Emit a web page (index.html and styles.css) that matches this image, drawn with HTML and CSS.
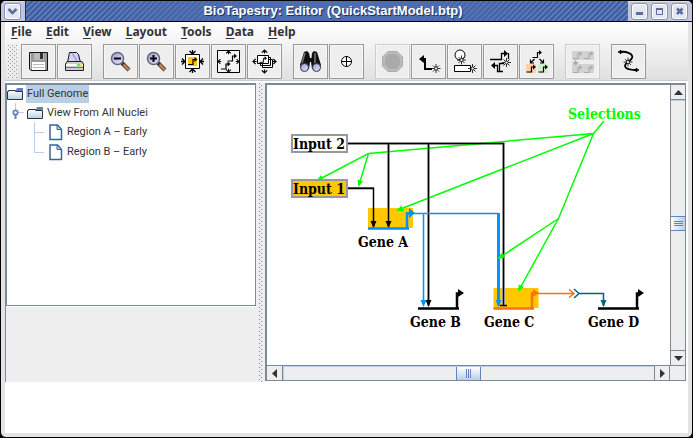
FILE: index.html
```html
<!DOCTYPE html>
<html lang="en">
<head>
<meta charset="utf-8">
<title>BioTapestry: Editor (QuickStartModel.btp)</title>
<link rel="stylesheet" href="styles.css">
</head>
<body>
<svg class="defs" aria-hidden="true">
  <defs>
    <g id="star" fill="none" stroke="#000"><path d="M0-4.500V4.500M-4.500 0H4.500M-3-3L3 3M-3 3L3-3" stroke-width=".8"/><circle r="1.600" fill="#eee" stroke-width=".7"/></g>
    <g id="gene"><path d="M-4.500 3.500H.5V-1.500H3" fill="none" stroke="currentColor" stroke-width="1.200"/><path d="M2-4L5-1.500L2 1Z" fill="currentColor"/></g>
    <g id="tip"><path d="M-3-3L0 0L3-3M0-4V0" fill="none" stroke="#000" stroke-width="1.300"/></g>
    <linearGradient id="lens" x1="0" y1="0" x2="1" y2="1"><stop offset="0" stop-color="#9c9cd8"/><stop offset="1" stop-color="#e8e8ff"/></linearGradient>
    <linearGradient id="folder-fill" x1="0" y1="0" x2="0" y2="1"><stop offset="0" stop-color="#fff"/><stop offset="1" stop-color="#b8cfe5"/></linearGradient>
    <g id="folder"><path d="M9 3L10 1H16V4H9Z" fill="#6382bf"/><path d="M.5 12.500V4.500H1.500V3.500H8.500V4.500H15.500V12.500Z" fill="url(#folder-fill)" stroke="#333"/></g>
    <g id="doc"><path d="M1 1H8.500L12.500 5.500V15.500H1Z" fill="#fff" stroke="#336699" stroke-width="1.500"/><path d="M8 1V5.500H12.500Z" fill="#b8cfe5" stroke="#336699"/></g>
    <marker id="m-black" viewBox="0 0 7 7" refX="6" refY="3.500" markerWidth="7" markerHeight="7" markerUnits="userSpaceOnUse" orient="auto"><path d="M0 .5L7 3.500L0 6.500Z"/></marker>
    <marker id="m-green" viewBox="0 0 7 7" refX="5" refY="3.500" markerWidth="7" markerHeight="7" markerUnits="userSpaceOnUse" orient="auto"><path d="M0 .5L7 3.500L0 6.500Z" fill="#0f0"/></marker>
    <marker id="m-blue" viewBox="0 0 7 7" refX="6" refY="3.500" markerWidth="7" markerHeight="7" markerUnits="userSpaceOnUse" orient="auto"><path d="M0 .5L7 3.500L0 6.500Z" fill="#0090ff"/></marker>
    <marker id="m-teal" viewBox="0 0 7 7" refX="6" refY="3.500" markerWidth="7" markerHeight="7" markerUnits="userSpaceOnUse" orient="auto"><path d="M0 .5L7 3.500L0 6.500Z" fill="#006478"/></marker>
  </defs>
</svg>
<div class="window">
  <header class="titlebar">
    <div class="title-side">
      <button class="win-btn" aria-label="Window menu"><svg viewBox="0 0 15 15"><path d="M3.500 5L7.500 9L11.500 5" fill="none" stroke="#5c6a9c" stroke-width="2.500"/></svg></button>
    </div>
    <div class="title-strip"><h1 class="title-text">BioTapestry: Editor (QuickStartModel.btp)</h1></div>
    <div class="title-side">
      <button class="win-btn" aria-label="Minimize"><svg viewBox="0 0 15 15"><path d="M4 8H11V11H4Z" fill="#5c6a9c"/></svg></button>
      <button class="win-btn" aria-label="Maximize"><svg viewBox="0 0 15 15"><path d="M4.500 4.500H10.500V10.500H4.500Z" fill="none" stroke="#5c6a9c"/><path d="M4 5H11" stroke="#5c6a9c" stroke-width="2"/></svg></button>
      <button class="win-btn" aria-label="Close"><svg viewBox="0 0 15 15"><path d="M5 4.500L10.500 10M10.500 4.500L5 10" stroke="#5c6a9c" stroke-width="2.500"/></svg></button>
    </div>
  </header>
  <div class="content">
    <div class="bars">
      <nav class="menubar">
        <button class="menu"><u>F</u>ile</button><button class="menu"><u>E</u>dit</button><button class="menu"><u>V</u>iew</button><button class="menu"><u>L</u>ayout</button><button class="menu"><u>T</u>ools</button><button class="menu"><u>D</u>ata</button><button class="menu"><u>H</u>elp</button>
      </nav>
      <div class="toolbar" role="toolbar">
        <span class="grip"></span>
        <div class="tools">
          <button class="tool" aria-label="Save"><svg viewBox="0 0 33 33"><path d="M7.500 7.500H25.500V25.500H9L7.500 24Z" fill="#999" stroke="#111"/><path d="M12 8H22V15H12Z" fill="#bbb"/><path d="M18 8H21V14H18Z" fill="#333"/><path d="M10 17H23V25H10Z" fill="#fff"/><path d="M11 19.500H22M11 22.500H22" stroke="#bbb"/><path d="M8.500 8V24" stroke="#ccc"/></svg></button>
          <button class="tool" aria-label="Print"><svg viewBox="0 0 33 33"><path d="M11.500 7.500H18.500L20.500 9.500L22.500 17.500H9.500Z" fill="#d4d4f8" stroke="#111"/><path d="M14 8L19 16" stroke="#aaaae0" stroke-width="2"/><path d="M9 16.500H24L25.500 19V25.500H7.500V19Z" fill="#ccc" stroke="#222"/><path d="M8 20H25" stroke="#fff" stroke-width="2"/><path d="M8 22.500H25" stroke="#777"/><path d="M19 19H22V21H19Z" fill="#7e0"/><path d="M22 19H24V21H22Z" fill="#fe0"/></svg></button>
        </div>
        <div class="tools">
          <button class="tool" aria-label="Zoom out"><svg viewBox="0 0 33 33"><path d="M18 18L25 25" stroke="#333" stroke-width="4"/><path d="M19.500 19.500L25 25" stroke="#c08050" stroke-width="2.500"/><circle cx="13.500" cy="13.500" r="6" fill="url(#lens)" stroke="#667" stroke-width="1.500"/><path d="M10 13.500H17" stroke="#000" stroke-width="2"/></svg></button>
          <button class="tool" aria-label="Zoom in"><svg viewBox="0 0 33 33"><path d="M18 18L25 25" stroke="#333" stroke-width="4"/><path d="M19.500 19.500L25 25" stroke="#c08050" stroke-width="2.500"/><circle cx="13.500" cy="13.500" r="6" fill="url(#lens)" stroke="#667" stroke-width="1.500"/><path d="M10 13.500H17M13.500 10V17" stroke="#000" stroke-width="2"/></svg></button>
          <button class="tool" aria-label="Zoom to selected"><svg viewBox="0 0 33 33"><path d="M9.500 9.500H23.500V23.500H9.500Z" fill="#fff" stroke="#000"/><path d="M12 12H21V21H12Z" fill="#ffc800"/><use href="#gene" transform="translate(16.500 16)"/><use href="#tip" transform="translate(16.500 9)"/><use href="#tip" transform="translate(16.500 24) rotate(180)"/><use href="#tip" transform="translate(9 16.500) rotate(-90)"/><use href="#tip" transform="translate(24 16.500) rotate(90)"/></svg></button>
          <button class="tool" aria-label="Zoom to model"><svg viewBox="0 0 33 33"><path d="M5.500 5.500H27.500V27.500H5.500Z" fill="#f4f4f4" stroke="#000"/><use href="#gene" transform="translate(20 12.500)"/><use href="#gene" transform="translate(13.500 20.500)"/><use href="#tip" transform="translate(16.500 6) rotate(180) scale(.8)"/><use href="#tip" transform="translate(16.500 27) scale(.8)"/><use href="#tip" transform="translate(6 16.500) rotate(90) scale(.8)"/><use href="#tip" transform="translate(27 16.500) rotate(-90) scale(.8)"/></svg></button>
          <button class="tool" aria-label="Zoom to all models"><svg viewBox="0 0 33 33"><path d="M14.500 14.500H24.500V22.500H14.500ZM12.500 12.500H22.500V20.500H12.500Z" fill="#fff" stroke="#000"/><path d="M9.500 10.500H20.500V18.500H9.500Z" fill="#fff" stroke="#000"/><use href="#gene" transform="translate(15 14.500) scale(.8)"/><use href="#tip" transform="translate(16.500 5) rotate(180) scale(.9)"/><use href="#tip" transform="translate(16.500 28) scale(.9)"/><use href="#tip" transform="translate(5 16.500) rotate(90) scale(.9)"/><use href="#tip" transform="translate(28 16.500) rotate(-90) scale(.9)"/></svg></button>
        </div>
        <div class="tools">
          <button class="tool" aria-label="Search"><svg viewBox="0 0 33 33"><path d="M10 7L13 6L15 8L16 13H17.500L18 8L20 6L23 7L27 20L26 24H18L17 17H16L15 24H7L6 20Z" fill="#111"/><path d="M11 8L8 18M21 8V18" stroke="#777" stroke-width="1.500"/><circle cx="10.500" cy="22.500" r="4" fill="url(#lens)" stroke="#334"/><circle cx="22.500" cy="22.500" r="4" fill="url(#lens)" stroke="#334"/></svg></button>
          <button class="tool" aria-label="Center"><svg viewBox="0 0 33 33"><circle cx="16.500" cy="16.500" r="5" fill="#fff" stroke="#000"/><path d="M11 16.500H22M16.500 11V22" stroke="#000"/></svg></button>
        </div>
        <div class="tools">
          <button class="tool" disabled aria-label="Stop"><svg viewBox="0 0 33 33"><path d="M12 6.500H21L26.500 12V21L21 26.500H12L6.500 21V12Z" fill="#bbb" stroke="#aaa"/><path d="M13 9H20L24 13V20L20 24H13L9 20V13Z" fill="#aaa"/></svg></button>
          <button class="tool" aria-label="Add link"><svg viewBox="0 0 33 33"><path d="M11 14H13V24H20" fill="none" stroke="#000" stroke-width="2"/><path d="M7 14L12 10V18Z"/><use href="#star" transform="translate(24 23.500)"/></svg></button>
          <button class="tool" aria-label="Add node"><svg viewBox="0 0 33 33"><circle cx="12" cy="10" r="5" fill="#fff" stroke="#000"/><path d="M6.500 20.500H22.500V26.500H6.500Z" fill="#fff" stroke="#000"/><use href="#star" transform="translate(13.500 15)"/><use href="#star" transform="translate(24.500 23.500)"/></svg></button>
          <button class="tool" aria-label="Draw network"><svg viewBox="0 0 33 33"><path d="M6 14.500H17.500V8.500H21M24.500 8V14M10 20.500H13.500V26.500H19M15.500 26V18.500H20" fill="none" stroke="#000" stroke-width="1.300"/><path d="M20 5L24 8.500L20 12ZM11 17L7 20.500L11 24Z"/><use href="#star" transform="translate(22.500 17.500)"/></svg></button>
          <button class="tool" aria-label="Propagate down"><svg viewBox="0 0 33 33"><path d="M6 19H16V28H6Z" fill="#fcd0a8"/><path d="M18 19H28V28H18Z" fill="#d0f0cc"/><use href="#gene" transform="translate(17 9)"/><use href="#gene" transform="translate(11 23.500)"/><use href="#gene" transform="translate(23 23.500)"/><path d="M14.500 14L10.500 18M19.500 14L23.500 18M10.500 14.500V18H14M20 18H23.500V14.500" fill="none" stroke="#000" stroke-width="1.200"/></svg></button>
        </div>
        <div class="tools">
          <button class="tool pale" disabled aria-label="Pull down"><svg viewBox="0 0 33 33"><path d="M6 6H28V15H6ZM6 19H28V28H6Z" fill="#d2d2d2"/><use href="#gene" transform="translate(11.500 10)"/><use href="#gene" transform="translate(22.500 10)"/><use href="#gene" transform="translate(11.500 24)"/><use href="#gene" transform="translate(22.500 24)"/><path d="M9.500 15V18" stroke="currentColor" stroke-width="1.500"/><path d="M6 17H13L9.500 20.500Z" fill="currentColor"/></svg></button>
        </div>
        <div class="tools">
          <button class="tool" aria-label="Relayout link"><svg viewBox="0 0 33 33"><path d="M8 7C14 6 22 9 20 13C18 17 13 17 13 21C13 24 18 25 25 25" fill="none" stroke="#000" stroke-width="1.800"/><path d="M6 7H11M8.500 5V9M21 25H27M24.500 23V27" stroke="#000" stroke-width="1.500"/><use href="#star" transform="translate(16 17)"/></svg></button>
        </div>
      </div>
    </div>
    <main class="split">
      <section class="side">
        <div class="tree">
          <div class="row root"><svg width="17" height="14"><use href="#folder"/></svg><span class="label selected">Full Genome</span></div>
          <div class="row branch"><svg width="37" height="20"><path d="M8.500 0V7M11 9.500H17" stroke="#b8cfe5"/><path d="M8.500 11V16" stroke="#6382bf" stroke-width="2"/><circle cx="8.500" cy="9.500" r="2.200" fill="#fff" stroke="#6382bf" stroke-width="1.800"/><use href="#folder" x="20" y="3"/></svg><span class="label">View From All Nuclei</span></div>
          <div class="row leaf"><svg width="57" height="20"><path d="M27.500 0V20M28 10.500H37" stroke="#b8cfe5"/><use href="#doc" x="42" y="2"/></svg><span class="label">Region A – Early</span></div>
          <div class="row leaf"><svg width="57" height="20"><path d="M27.500 0V10.500H37" fill="none" stroke="#b8cfe5"/><use href="#doc" x="42" y="2"/></svg><span class="label">Region B – Early</span></div>
        </div>
        <div class="blank"></div>
      </section>
      <div class="divider"></div>
      <section class="viewer">
        <div class="canvas">
          <svg class="diagram" width="403" height="280" viewBox="267 85 403 280">
            <g fill="#ffc800"><path d="M368 208H413V228H368ZM493.500 288H538.500V308H493.500Z"/></g>
            <g fill="none" stroke="#c4c4c4" stroke-width="3"><path d="M348 143.500H503.500V305M388.500 144V220M428.500 144V300"/></g>
            <g fill="none" stroke="#bfe3ff" stroke-width="3"><path d="M413 213.500H498M423.500 214V300"/></g>
            <g fill="none" stroke="#0f0" stroke-width="1.500">
              <path d="M604 121L593.500 133.500L368.500 153.500L318 180" marker-end="url(#m-green)"/>
              <path d="M368.500 153.500L359 185" marker-end="url(#m-green)"/>
              <path d="M593.500 133.500L398 210" marker-end="url(#m-green)"/>
              <path d="M593.500 133.500L558.500 218.500L519 290" marker-end="url(#m-green)"/>
            </g>
            <path d="M348 187.500H374" stroke="#b44" fill="none"/>
            <g fill="none" stroke="#000" stroke-width="1.500">
              <path d="M348 188.500H373.500V227" marker-end="url(#m-black)"/>
              <path d="M388.500 143V227" marker-end="url(#m-black)"/>
              <path d="M428.500 143V306" marker-end="url(#m-black)"/>
              <path d="M348 143.500H503.500V305.500M500 305.500H507"/>
            </g>
            <path d="M498.500 213V302" stroke="#b06080" stroke-width="3"/>
            <g fill="none" stroke="#0090ff">
              <path d="M413 213.500H499"/>
              <path d="M498.500 213V306" stroke-width="2" marker-end="url(#m-blue)"/>
              <path d="M423.500 213V306" marker-end="url(#m-blue)"/>
              <path d="M368 228.500H409M407 228V213.500H410" stroke-width="2.500"/>
            </g>
            <path d="M409 208L415 213L409 218Z" fill="#0090ff"/>
            <path d="M558.500 218.500L499 258" stroke="#0f0" stroke-width="1.500" marker-end="url(#m-green)"/>
            <g fill="none" stroke="#000" stroke-width="2.500"><path d="M418 308.500H459M457 308V293.500H460M598 308.500H639M637 308V293.500H640"/></g>
            <path d="M458 289L464 293L458 297ZM638 289L644 293L638 297Z"/>
            <g fill="none" stroke="#ff7010"><path d="M493.500 308.500H534M532 308V293.500H535" stroke-width="2.500"/><path d="M538 293.500H573M569 289.500L574 293.500L569 297.500" stroke-width="1.500"/></g>
            <path d="M533 289L539 293L533 297Z" fill="#ff7010"/>
            <path d="M574 289L579 293.500L574 298M579 293.500H603.500V306" fill="none" stroke="#006478" stroke-width="1.500" marker-end="url(#m-teal)"/>
            <path d="M292 135H347V152H292Z" fill="#fff" stroke="#999" stroke-width="2"/>
            <path d="M292 180H347V197H292Z" fill="#ffc800" stroke="#999" stroke-width="2"/>
            <g class="names">
              <text x="293" y="149">Input 2</text><text x="293" y="194">Input 1</text>
              <text x="358" y="247">Gene A</text><text x="410" y="327">Gene B</text><text x="484" y="327">Gene C</text><text x="588" y="327">Gene D</text>
              <text class="note" x="568" y="119">Selections</text>
            </g>
          </svg>
        </div>
        <div class="vbar"><button class="arrow" aria-label="Scroll up"><svg width="9" height="5"><path d="M0 5L4.500 0L9 5Z" fill="#333"/></svg></button><div class="track"><span class="thumb"></span></div><button class="arrow" aria-label="Scroll down"><svg width="9" height="5"><path d="M0 0L4.500 5L9 0Z" fill="#333"/></svg></button></div>
        <div class="hbar"><button class="arrow" aria-label="Scroll left"><svg width="5" height="9"><path d="M5 0L0 4.500L5 9Z" fill="#333"/></svg></button><div class="track"><span class="thumb"></span></div><button class="arrow" aria-label="Scroll right"><svg width="5" height="9"><path d="M0 0L5 4.500L0 9Z" fill="#333"/></svg></button></div>
        <div class="corner"></div>
      </section>
    </main>
    <footer class="status"></footer>
  </div>
</div>
</body>
</html>
```

FILE: styles.css
```css
* { box-sizing: border-box; }
html, body { height: 100%; }
body { margin: 0; background: #000; font-family: "Noto Sans", sans-serif; }
button { margin: 0; padding: 0; border: 0; background: none; font: inherit; color: inherit; }
svg { display: block; flex: none; }
.defs { position: absolute; width: 0; height: 0; }

.window { display: flex; flex-direction: column; height: 100vh; border: 1px solid #000; border-radius: 6px; background: #e4e2e4; overflow: hidden; }
.titlebar { display: flex; flex: none; height: 21px; border-bottom: 1px solid #000; background: #c2c4dc; }
.title-side { display: flex; align-items: center; gap: 3px; padding: 0 4px 0 3px; border-top: 1px solid #dcdcec; }
.win-btn { width: 17px; height: 17px; border: 1px solid #8890b8; border-radius: 3px; background: #e4e6f2; box-shadow: inset 0 0 0 1px #fff; }
.win-btn svg { width: 15px; height: 15px; }
.title-strip { flex: 1; display: flex; justify-content: center; align-items: center; padding-left: 12px; border-left: 1px solid #1e3058; overflow: hidden;
  background: linear-gradient(90deg, transparent 10%, #4d6db0 40%, #4d6db0 60%, transparent 90%), repeating-linear-gradient(135deg, #3c5a9c 0 1px, #6682c0 2px, #5876b6 3px, #3c5a9c 4px); }
.title-text { margin: 0; font: bold 13px/20px "Liberation Sans", sans-serif; color: #fff; text-shadow: 1px 1px 0 #1e3058; white-space: nowrap; }

.content { flex: 1; display: flex; flex-direction: column; min-height: 0; margin: 0 4px 4px; background: #fff; }
.bars { flex: none; background: linear-gradient(#fff, #e0e0e0); border-bottom: 1px solid #ccc; }
.menubar { display: flex; gap: 14px; height: 21px; padding: 0 6px; font-size: 12px; font-weight: bold; line-height: 19px; color: #333; }
.menu { height: 19px; }
.menu u { text-underline-offset: 2px; }
.toolbar { display: flex; gap: 11px; padding: 1px 0 1px 2px; }
.grip, .divider { background-color: #eee; background-size: 4px 4px; }
.grip { width: 10px; margin-right: -7px; background-image: conic-gradient(from 270deg at 1px 1px, #999 90deg, transparent 0), conic-gradient(from 270deg at 1px 1px, #999 90deg, transparent 0); background-position: 1px 1px, 3px 3px; }
.tools { display: flex; gap: 1px; }
.tool { width: 35px; height: 35px; border: 1px solid #999; background: #eee; box-shadow: inset 0 0 0 1px #f6f6f6; color: #000; }
.tool svg { width: 33px; height: 33px; }
.tool:disabled { border-color: #ccc; }
.pale { color: #aaa; }

.split { flex: none; display: flex; height: 299px; margin-top: 2px; }
.side { flex: 250 1 0; display: flex; flex-direction: column; border-left: 1px solid #7a8a99; min-width: 0; }
.tree { height: 223px; border: 1px solid #7a8a99; border-top-width: 2px; background: #fff; font: 11px Roboto, sans-serif; color: #333; }
.row { display: flex; align-items: center; height: 20px; white-space: nowrap; }
.root { height: 18px; }
.branch { height: 19px; }
.label { margin-left: 1px; padding: 0 2px; line-height: 18px; }
.root .label { margin-left: 2px; padding: 0 1px; }
.selected { background: #b8cfe5; }
.blank { flex: 1; margin-top: 1px; background: #eee; }
.divider { flex: none; width: 9px; border: solid #eee; border-width: 0 2px 0 3px; background-image: conic-gradient(from 270deg at 1px 1px, #7a8a99 90deg, transparent 0), conic-gradient(from 270deg at 1px 1px, #7a8a99 90deg, transparent 0); background-position: 0 0, 2px 2px; }
.viewer { flex: 420 1 0; display: grid; grid-template: 1fr 16px / 1fr 16px; height: 298px; margin-right: 2px; border: solid #7a8a99; border-width: 2px 0 0 2px; min-width: 0; }
.canvas { background: #fff; overflow: hidden; min-width: 0; }
.names { font: bold 14px "DejaVu Serif Condensed", "DejaVu Serif", serif; }
.note { fill: #0f0; }
.vbar, .hbar { display: flex; border: 1px solid #7a8a99; background: #eee; min-width: 0; }
.vbar { flex-direction: column; border-width: 0 1px; }
.hbar { border-width: 1px 0; }
.corner { border: solid #7a8a99; border-width: 1px 1px 1px 0; background: #eee; }
.arrow { flex: none; display: grid; place-items: center; width: 14px; height: 15px; }
.vbar .arrow:first-child { border-bottom: 1px solid #7a8a99; }
.vbar .arrow:last-child { border-top: 1px solid #7a8a99; }
.hbar .arrow { width: 16px; height: 14px; }
.hbar .arrow:first-child { border-right: 1px solid #7a8a99; }
.hbar .arrow:last-child { border-left: 1px solid #7a8a99; border-right: 1px solid #7a8a99; }
.track { flex: 1; display: flex; }
.vbar .track { flex-direction: column; border-top: 1px solid #b8cfe5; }
.hbar .track { border: solid #b8cfe5; border-width: 1px 0 0 1px; }
.vbar .track::before { content: ""; flex: 114; }
.vbar .track::after { content: ""; flex: 118; }
.hbar .track::before, .hbar .track::after { content: ""; flex: 1; }
.thumb { flex: none; display: grid; place-items: center; border: solid #6382bf; background: linear-gradient(90deg, #fff, #b8cfe5); }
.vbar .thumb { height: 15px; border-width: 1px 0; }
.hbar .thumb { width: 25px; border-width: 0 1px; background: linear-gradient(#fff, #b8cfe5); }
.thumb::before { content: ""; }
.vbar .thumb::before { width: 9px; height: 5px; background: repeating-linear-gradient(#6382bf 0 1px, transparent 1px 2px); }
.hbar .thumb::before { width: 5px; height: 9px; background: repeating-linear-gradient(90deg, #6382bf 0 1px, transparent 1px 2px); }
.status { flex: 1; background: #fff; }
```
